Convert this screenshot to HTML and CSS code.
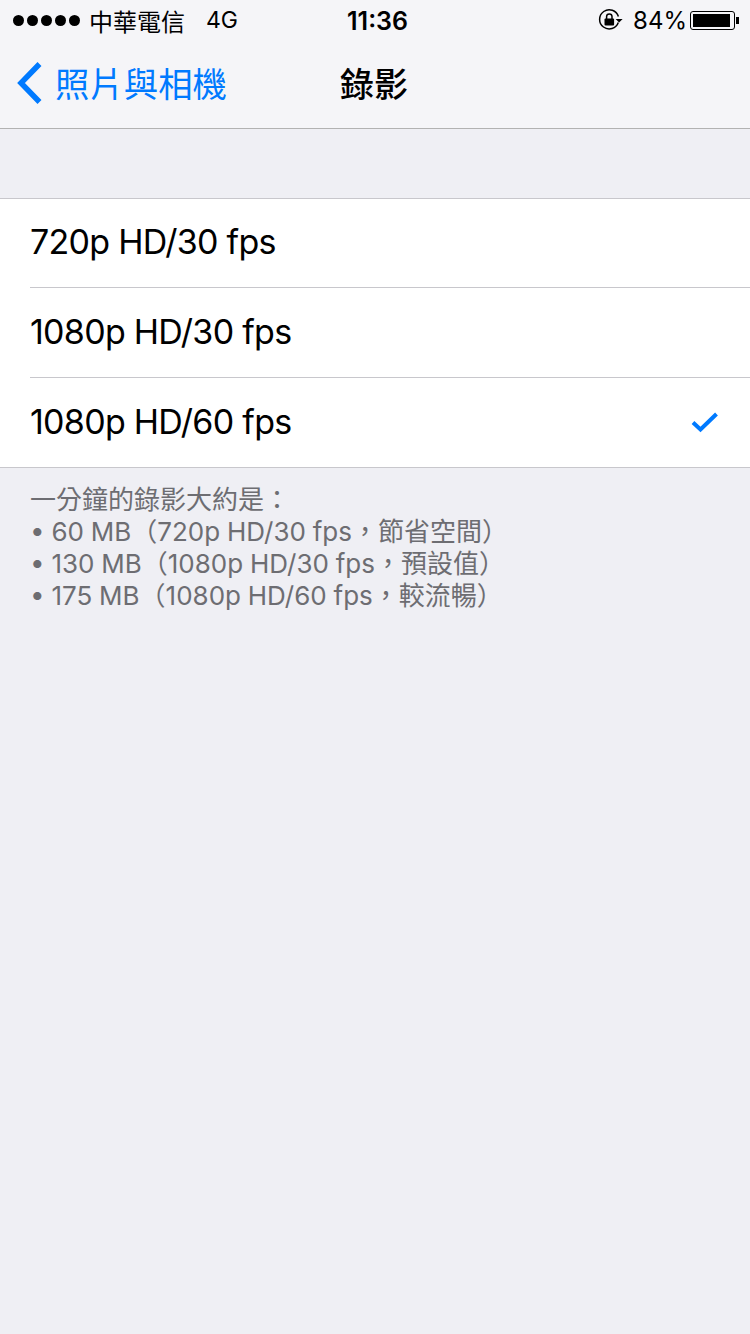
FILE: index.html
```html
<!DOCTYPE html>
<html lang="zh-Hant">
<head>
  <meta charset="UTF-8">
  <meta name="viewport" content="width=device-width, initial-scale=1.0">
  <title>錄影</title>
  <link rel="stylesheet" href="styles.css">
</head>
<body>
  <header class="top">
    <div class="status">
      <div class="status-left">
        <span class="signal"><i></i><i></i><i></i><i></i><i></i></span>
        <span class="carrier">中華電信</span>
        <span class="network">4G</span>
      </div>
      <div class="clock">11:36</div>
      <div class="status-right">
        <svg class="lock" width="26" height="24" viewBox="0 0 26 24">
          <path d="M20.3 14.5A9.6 9.6 0 1 1 20.4 8.500" fill="none" stroke="#000" stroke-width="1.5"/>
          <path d="M17.600 11h7l-3.500 3.600z" fill="#000"/>
          <rect x="6.500" y="10.500" width="9.600" height="7" rx="1" fill="#000"/>
          <path d="M8.600 11V8.600a2.700 2.700 0 0 1 5.400 0V11" fill="none" stroke="#000" stroke-width="1.500"/>
        </svg>
        <span class="percent">84%</span>
        <span class="battery"><span class="battery-fill"></span></span>
        <span class="battery-tip"></span>
      </div>
    </div>
    <nav class="nav">
      <a class="back">
        <svg width="28" height="44" viewBox="0 0 28 44">
          <path d="M24.500 3L6 22l18.500 19" fill="none" stroke="#007aff" stroke-width="5.500"/>
        </svg>
        <span>照片與相機</span>
      </a>
      <h1>錄影</h1>
    </nav>
  </header>

  <ul class="options">
    <li class="option">720p HD/30 fps</li>
    <li class="option">1080p HD/30 fps</li>
    <li class="option">1080p HD/60 fps
      <svg class="check" width="28" height="22" viewBox="0 0 28 22">
        <path d="M2 11.500l7.500 7L25.500 3" fill="none" stroke="#007aff" stroke-width="4"/>
      </svg>
    </li>
  </ul>

  <p class="note">一分鐘的錄影大約是：<br>
    • 60 MB（720p HD/30 fps，節省空間）<br>
    • 130 MB（1080p HD/30 fps，預設值）<br>
    • 175 MB（1080p HD/60 fps，較流暢）</p>
</body>
</html>
```

FILE: styles.css
```css
* {
  box-sizing: border-box;
}

body {
  margin: 0;
  height: 1334px;
  overflow: hidden;
  font-family: "Inter", "Noto Sans CJK TC", sans-serif;
  background-color: #efeff4;
  color: #000;
}

.top {
  height: 129px;
  background-color: #f5f5f8;
  border-bottom: 1px solid #b2b2b2;
}

.status {
  height: 40px;
  padding: 0 11px 0 13px;
  display: grid;
  grid-template-columns: 1fr auto 1fr;
  align-items: center;
}

.status-left {
  display: flex;
  align-items: center;
}

.signal {
  display: flex;
  gap: 3px;
  margin-right: 9px;
}

.signal i {
  width: 11px;
  height: 11px;
  border-radius: 50%;
  background-color: #000;
}

.carrier {
  font-size: 24px;
  margin-right: 21px;
}

.network {
  font-size: 23px;
}

.clock {
  font-size: 25px;
  font-weight: 600;
  margin: 1px 0 0 3px;
}

.status-right {
  display: flex;
  align-items: center;
  justify-content: flex-end;
}

.lock {
  margin-right: 9px;
}

.percent {
  font-size: 24px;
  margin-right: 3px;
}

.battery {
  width: 45px;
  height: 19px;
  padding: 2px;
  border: 1px solid #000;
  border-radius: 3px;
}

.battery-fill {
  display: block;
  width: 37px;
  height: 13px;
  background-color: #000;
}

.battery-tip {
  width: 3px;
  height: 7px;
  margin-left: 1px;
  background-color: #000;
}

.nav {
  height: 88px;
  position: relative;
  display: flex;
  align-items: center;
  justify-content: center;
  padding-bottom: 4px;
}

.back {
  position: absolute;
  left: 15px;
  top: 2px;
  height: 84px;
  display: flex;
  align-items: center;
  gap: 12px;
  color: #007aff;
  font-size: 34.4px;
}

.back span {
  margin-bottom: 4px;
}

.back svg {
  margin-bottom: 2px;
}

.nav h1 {
  margin: 0 0 0 -2px;
  font-size: 34px;
  font-weight: 500;
}

.options {
  list-style: none;
  margin: 69px 0 0;
  padding: 0 0 0 30px;
  background-color: #fff;
  border-top: 1px solid #c8c7cc;
  border-bottom: 1px solid #c8c7cc;
}

.option {
  height: 90px;
  padding: 0 31px 2px 0;
  display: flex;
  align-items: center;
  justify-content: space-between;
  font-size: 34px;
  letter-spacing: -0.72px;
  border-bottom: 1px solid #c8c7cc;
}

.option:first-child {
  height: 89px;
  padding-bottom: 4px;
}

.option:last-child {
  height: 89px;
  border-bottom: none;
}

.note {
  margin: 16px 0 0;
  padding: 0 30px;
  font-size: 26px;
  line-height: 32px;
  color: #6d6d72;
  word-spacing: -0.5px;
}
```
